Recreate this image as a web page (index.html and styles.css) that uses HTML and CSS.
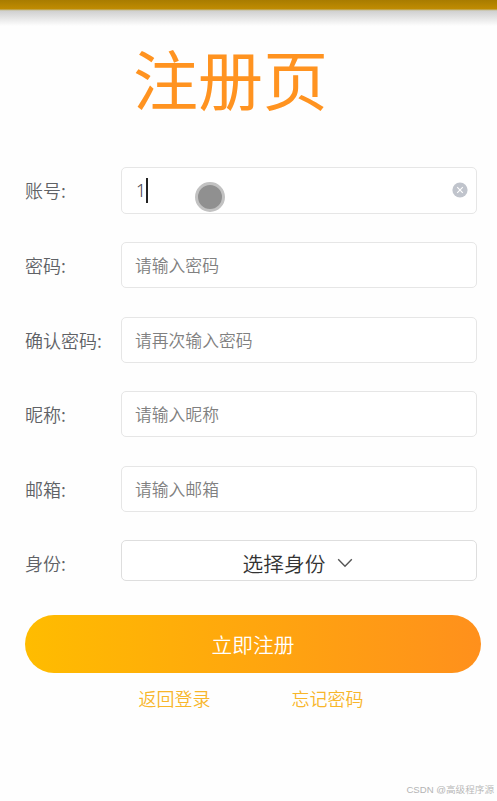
FILE: index.html
```html
<!DOCTYPE html>
<html lang="zh-CN">
<head>
<meta charset="UTF-8" />
<meta name="viewport" content="width=device-width, initial-scale=1.0"/>
<title>注册页</title>
<link rel="stylesheet" href="styles.css">
</head>
<body>
<div class="top-bar"></div>
<div class="page">
  <h1>注册页</h1>

  <form class="form">
    <div class="form-item">
      <label for="account">账号:</label>
      <div class="input-box">
        <span class="value" id="account">1</span>
        <span class="caret"></span>
        <svg class="clear" viewBox="0 0 16 16">
          <circle cx="8" cy="8" r="7.6" fill="#c0c4cc"/>
          <path d="M5.2 5.2l5.6 5.6M10.8 5.2l-5.6 5.6" stroke="#fff" stroke-width="1.1" fill="none"/>
        </svg>
        <span class="touch"></span>
      </div>
    </div>
    <div class="form-item">
      <label for="password">密码:</label>
      <input type="password" id="password" placeholder="请输入密码" />
    </div>
    <div class="form-item">
      <label for="confirm">确认密码:</label>
      <input type="password" id="confirm" placeholder="请再次输入密码" />
    </div>
    <div class="form-item">
      <label for="nickname">昵称:</label>
      <input type="text" id="nickname" placeholder="请输入昵称" />
    </div>
    <div class="form-item">
      <label for="email">邮箱:</label>
      <input type="text" id="email" placeholder="请输入邮箱" />
    </div>
    <div class="form-item">
      <label>身份:</label>
      <div class="select">
        <span>选择身份</span>
        <svg class="arrow" viewBox="0 0 16 10">
          <path d="M1.2 1.3L8 8.2l6.8-6.9" stroke="#555" stroke-width="1.4" fill="none"/>
        </svg>
      </div>
    </div>

    <button type="button" class="submit">立即注册</button>
  </form>

  <div class="links">
    <a>返回登录</a>
    <a>忘记密码</a>
  </div>
</div>
<div class="watermark">CSDN @高级程序源</div>
</body>
</html>
```
FILE: styles.css
```css
* {
  box-sizing: border-box;
}

body {
  margin: 0;
  height: 801px;
  overflow: hidden;
  display: flex;
  flex-direction: column;
  background: #fefefe;
  font-family: "Noto Sans CJK SC", sans-serif;
  font-weight: 350;
}

.top-bar {
  flex: none;
  height: 26px;
  background: linear-gradient(#a87c00, #c08c02 9px, #c5bd91 10px, #d0d0d0 11px, #e2e2e2 17px, #fefefe 26px);
}

.page {
  flex: 1;
  padding: 0 16px 0 25px;
}

h1 {
  margin: 3px 0 42.4px;
  height: 96px;
  line-height: 96px;
  padding-right: 45px;
  text-align: center;
  font-size: 65px;
  font-weight: 400;
  color: #ff9320;
}

.form-item {
  display: flex;
  height: 46.2px;
  margin-bottom: 28.4px;
  padding-right: 4px;
}

label {
  width: 96px;
  flex: none;
  line-height: 47px;
  font-size: 18px;
  color: #606266;
  white-space: nowrap;
}

input,
.input-box,
.select {
  flex: 1;
  min-width: 0;
  padding: 0 8px 0 13px;
  border: 1.5px solid #e6e6e6;
  border-radius: 5px;
  background: #fff;
}

input {
  font-family: inherit;
  font-weight: inherit;
  font-size: 16.8px;
  outline: none;
}

input::placeholder {
  color: #808080;
}

.input-box {
  position: relative;
  display: flex;
  align-items: center;
}

.value {
  padding-left: 1px;
  font-family: "Noto Sans", sans-serif;
  font-size: 17.5px;
  font-weight: 300;
  color: #404048;
}

.caret {
  width: 1.5px;
  height: 25px;
  background: #222;
}

.clear {
  width: 16px;
  height: 16px;
  margin-left: auto;
}

/* touch point indicator */
.touch {
  position: absolute;
  left: 73px;
  top: 14px;
  width: 30px;
  height: 30px;
  border: 3px solid #c2c2c2;
  border-radius: 50%;
  background: #909090;
}

.select {
  display: flex;
  height: 41px;
  align-items: center;
  justify-content: center;
  gap: 12px;
  padding: 4px 2px 0 0;
  border-color: #dedede;
  font-size: 20.7px;
  color: #333;
}

.arrow {
  width: 16px;
  height: 10px;
}

.submit {
  display: block;
  width: 100%;
  height: 58px;
  padding: 0;
  border: none;
  border-radius: 29px;
  background: linear-gradient(90deg, #ffbc00, #ff901c);
  color: #fff;
  font-family: inherit;
  font-size: 20.7px;
  font-weight: inherit;
}

.links {
  display: flex;
  justify-content: center;
  gap: 81px;
  height: 52px;
  padding-right: 4px;
  line-height: 51px;
  font-size: 18px;
  color: #f8b62a;
}

.watermark {
  flex: none;
  height: 24px;
  padding: 1px 3px 0 0;
  line-height: 24px;
  text-align: right;
  font-family: "Liberation Sans", "Noto Sans CJK SC", sans-serif;
  font-size: 9.6px;
  color: #b4b4b4;
}
```
